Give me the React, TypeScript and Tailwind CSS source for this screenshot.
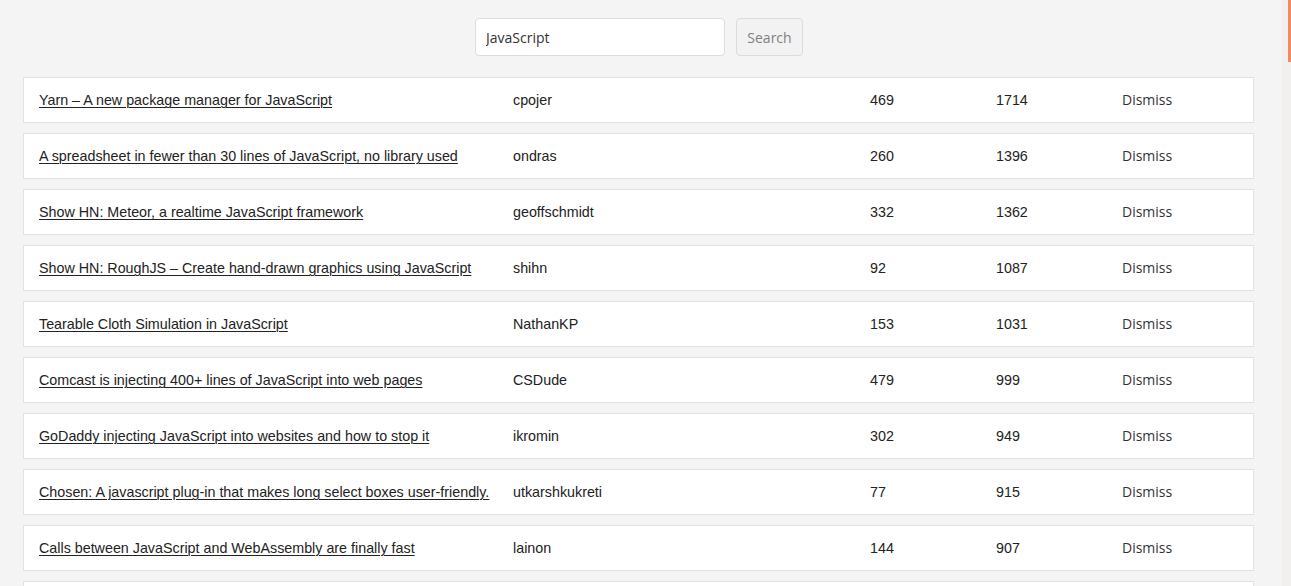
import React from "react";

const rows = [
  ["Yarn – A new package manager for JavaScript", "cpojer", "469", "1714"],
  ["A spreadsheet in fewer than 30 lines of JavaScript, no library used", "ondras", "260", "1396"],
  ["Show HN: Meteor, a realtime JavaScript framework", "geoffschmidt", "332", "1362"],
  ["Show HN: RoughJS – Create hand-drawn graphics using JavaScript", "shihn", "92", "1087"],
  ["Tearable Cloth Simulation in JavaScript", "NathanKP", "153", "1031"],
  ["Comcast is injecting 400+ lines of JavaScript into web pages", "CSDude", "479", "999"],
  ["GoDaddy injecting JavaScript into websites and how to stop it", "ikromin", "302", "949"],
  ["Chosen: A javascript plug-in that makes long select boxes user-friendly.", "utkarshkukreti", "77", "915"],
  ["Calls between JavaScript and WebAssembly are finally fast", "lainon", "144", "907"],
  ["Math.js – An extensive math library for JavaScript and Node.js", "josdejong", "188", "880"],
];

const arial = "font-['Liberation_Sans',Arial,sans-serif]";
const ubuntu = "font-['Open_Sans','Noto_Sans',sans-serif]";

export default function App() {
  return (
    <div className="flex h-screen w-full overflow-hidden bg-[#f4f4f4]">
      <div className="flex-1 overflow-hidden">
        <div className="flex justify-center gap-[11px] pt-[18px] pr-[4px]">
          <input
            defaultValue="JavaScript"
            className={`h-[38px] w-[250px] rounded-[4px] border border-[#dcdcdc] bg-white px-[10px] text-[14px] text-[#333] outline-none ${ubuntu}`}
          />
          <button
            className={`h-[38px] w-[67px] rounded-[4px] border border-[#dcdcdc] bg-[#f2f2f2] text-[14px] text-[#808080] ${ubuntu}`}
          >
            Search
          </button>
        </div>
        <div className="mx-[23px] mt-[21px] flex w-[1231px] flex-col gap-[10px]">
          {rows.map(([title, author, points, comments]) => (
            <div
              key={title}
              className={`flex h-[46px] shrink-0 items-center border border-[#e3e3e3] bg-white pt-[2px] pl-[15px] text-[14.3px] text-[#222] ${arial}`}
            >
              <span className="w-[474px] shrink-0">
                <a href="#" className="underline decoration-1 underline-offset-2">
                  {title}
                </a>
              </span>
              <span className="w-[357px] shrink-0">{author}</span>
              <span className="w-[126px] shrink-0">{points}</span>
              <span className="w-[126px] shrink-0">{comments}</span>
              <span className={`${ubuntu} -mt-[4px] text-[14px] text-[#333]`}>Dismiss</span>
            </div>
          ))}
        </div>
      </div>
      <div className="flex h-full w-[9px] shrink-0 justify-end bg-[#f1f0ef]">
        <div className="h-[62px] w-[3px] bg-[#ef8a67]" />
      </div>
    </div>
  );
}
